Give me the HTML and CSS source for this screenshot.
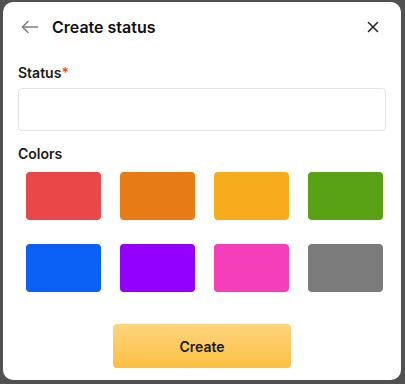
FILE: index.html
```html
<!DOCTYPE html>
<html lang="en">
<head>
  <meta charset="UTF-8">
  <meta name="viewport" content="width=device-width, initial-scale=1.0">
  <title>Create status</title>
  <link rel="stylesheet" href="styles.css">
</head>
<body>

  <div class="modal">
    <div class="modal-header">
      <span class="back">
        <svg width="18" height="18" viewBox="0 0 18 18" fill="none" stroke="#7d7d7d" stroke-width="1.5" stroke-linecap="round" stroke-linejoin="round">
          <path d="M16.5 9H1.5"/>
          <path d="M7 3.5L1.5 9L7 14.5"/>
        </svg>
      </span>
      <h1>Create status</h1>
      <span class="close">
        <svg width="12" height="12" viewBox="0 0 12 12" fill="none" stroke="#2a2a2a" stroke-width="1.6" stroke-linecap="round">
          <path d="M1.5 1.5L10.5 10.5"/>
          <path d="M10.5 1.5L1.5 10.5"/>
        </svg>
      </span>
    </div>

    <form class="modal-body">
      <label for="status">Status<span class="req">*</span></label>
      <input type="text" id="status" name="status">

      <label class="colors-label">Colors</label>
      <div class="colors">
        <span class="swatch" style="background-color: #ea4848"></span>
        <span class="swatch" style="background-color: #e77b16"></span>
        <span class="swatch" style="background-color: #f7ac1e"></span>
        <span class="swatch" style="background-color: #58a114"></span>
        <span class="swatch" style="background-color: #0b60f5"></span>
        <span class="swatch" style="background-color: #9400ff"></span>
        <span class="swatch" style="background-color: #f53fba"></span>
        <span class="swatch" style="background-color: #7b7b7b"></span>
      </div>

      <div class="actions">
        <button type="button">Create</button>
      </div>
    </form>
  </div>

</body>
</html>
```

FILE: styles.css
```css
body {
  font-family: 'Inter', 'Liberation Sans', sans-serif;
  background-color: #515151;
  margin: 0;
  padding: 0;
}

.modal {
  width: 398px;
  height: 378px;
  margin: 2px 0 0 3px;
  background-color: #fff;
  border-radius: 10px;
  box-sizing: border-box;
}

.modal-header {
  display: flex;
  align-items: center;
  height: 50px;
  padding: 0 22px 0 18px;
}

.back {
  display: flex;
}

.modal-header h1 {
  flex: 1;
  margin: 0 0 0 13px;
  font-size: 16px;
  font-weight: 600;
  color: #111;
}

.close {
  display: flex;
}

.modal-body {
  padding: 11px 15px 0 15px;
}

label {
  display: block;
  font-size: 14px;
  font-weight: 600;
  line-height: 20px;
  color: #1a1a1a;
  margin-bottom: 5px;
}

.req {
  color: #ef4444;
}

input {
  display: block;
  width: 100%;
  height: 43px;
  border: 1px solid #e3e3e3;
  border-radius: 4px;
  box-sizing: border-box;
  margin-bottom: 13px;
}

.colors-label {
  margin-bottom: 8px;
}

.colors {
  display: grid;
  grid-template-columns: repeat(4, 75px);
  column-gap: 19px;
  row-gap: 24px;
  padding-left: 8px;
}

.swatch {
  display: block;
  height: 48px;
  border-radius: 4px;
}

.actions {
  display: flex;
  justify-content: center;
  margin-top: 32px;
}

button {
  width: 178px;
  height: 44px;
  border: none;
  border-radius: 4px;
  background: linear-gradient(#fed47e, #fcbf42);
  font-family: inherit;
  font-size: 14px;
  font-weight: 600;
  color: #1a1a1a;
  cursor: pointer;
}
```
